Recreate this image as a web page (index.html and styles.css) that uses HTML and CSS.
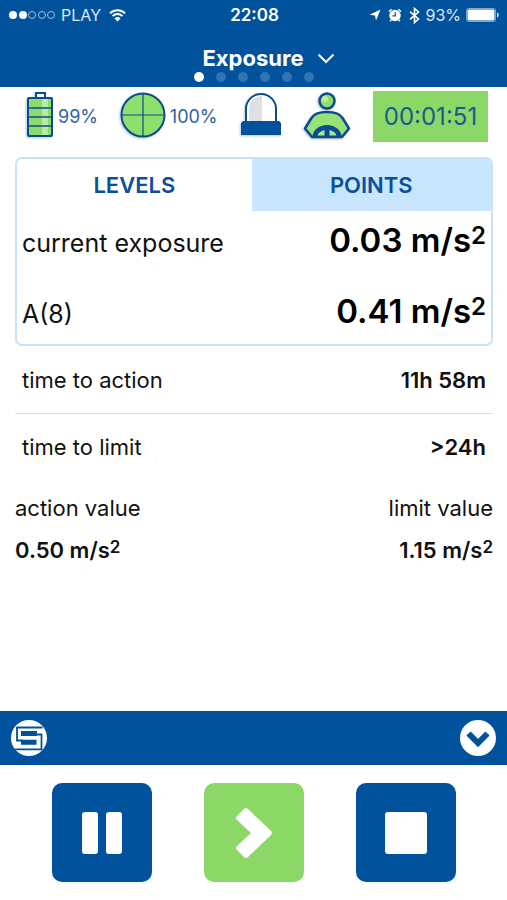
FILE: index.html
```html
<!DOCTYPE html>
<html lang="en">
<head>
<meta charset="utf-8">
<meta name="viewport" content="width=device-width, initial-scale=1">
<title>Exposure</title>
<link rel="stylesheet" href="styles.css">
</head>
<body>
<header class="top">
  <div class="status">
    <div class="status-side">
      <svg class="icon" width="47" height="10" viewBox="0 0 47 10" aria-hidden="true">
        <circle cx="4" cy="5" r="4" fill="#fff"/><circle cx="14" cy="5" r="4" fill="#fff"/>
        <g fill="none" stroke="#9fc0e0"><circle cx="23" cy="5" r="3.5"/><circle cx="33" cy="5" r="3.5"/><circle cx="42" cy="5" r="3.5"/></g>
      </svg>
      <span class="carrier">PLAY</span>
      <svg class="icon" width="17" height="13" viewBox="0 0 17 13" aria-hidden="true">
        <path d="M1 4.4a10.8 10.8 0 0 1 15 0M3.6 7.1a7 7 0 0 1 9.8 0" fill="none" stroke="#fff" stroke-width="2"/>
        <path d="M8.500 12.500 5.500 9.400a4.300 4.300 0 0 1 6 0z" fill="#fff"/>
      </svg>
    </div>
    <time class="clock">22:08</time>
    <div class="status-side status-right">
      <div class="status-icons">
        <svg class="icon" width="12" height="12" viewBox="0 0 12 12" aria-hidden="true"><path d="M11.500.5 7 11.500 6 6.400.5 5.800z" fill="#fff"/></svg>
        <svg class="icon" width="14" height="14" viewBox="0 0 14 14" aria-hidden="true">
          <circle cx="7" cy="7.500" r="5.700" fill="#fff"/><path d="M1 3.800 3.600 1.300M13 3.800l-2.600-2.500M3.300 12l-1.300 1.300M10.700 12l1.300 1.300" stroke="#fff" stroke-width="1.500"/>
          <path d="M7.300 4.200v3.600H4.500" fill="none" stroke="#00529c" stroke-width="1.200"/>
        </svg>
        <svg class="icon" width="11" height="17" viewBox="0 0 11 17" aria-hidden="true"><path d="M1 4.700 9.500 12 5.500 15.500v-14L9.500 5 1 12.300" fill="none" stroke="#fff" stroke-width="1.600"/></svg>
      </div>
      <span class="percent">93%</span>
      <svg class="icon" width="34" height="14" viewBox="0 0 34 14" aria-hidden="true">
        <rect x=".5" y=".5" width="29" height="13" rx="2" fill="none" stroke="#7fa9d2"/><rect x="1.500" y="1.500" width="27" height="11" rx="1" fill="#fff"/>
        <path d="M31 4.500a2.700 2.700 0 0 1 0 5z" fill="#fff"/>
      </svg>
    </div>
  </div>
  <button class="title" type="button">Exposure
    <svg class="icon" width="18" height="11" viewBox="0 0 18 11" aria-hidden="true"><path d="m1.500 1.500 7.500 7.500 7.500-7.500" fill="none" stroke="#fff" stroke-width="2"/></svg>
  </button>
  <div class="pages"><i class="dot current"></i><i class="dot"></i><i class="dot"></i><i class="dot"></i><i class="dot"></i><i class="dot"></i></div>
</header>

<main class="content">
  <section class="sensors" aria-label="Device status">
    <div class="sensor">
      <svg class="shaded" width="28" height="47" viewBox="0 0 28 47" aria-hidden="true">
        <path d="M10 7V2h9v5" fill="#fff" stroke="#0b4c91" stroke-width="2"/>
        <rect x="2" y="7" width="24" height="38" rx="1" fill="#8ddc6b" stroke="#0b4c91" stroke-width="2"/>
        <path d="M16 8h6v36h-6z" fill="#b8eba2"/>
        <path d="M2 17h24M2 26h24M2 35h24" stroke="#0b4c91" stroke-width="1.300"/>
      </svg>
      <span class="reading">99%</span>
    </div>
    <div class="sensor">
      <svg class="shaded" width="46" height="47" viewBox="0 0 46 47" aria-hidden="true">
        <circle cx="23" cy="24" r="21.500" fill="#8ee06c" stroke="#0b4c91" stroke-width="2"/>
        <path d="M23 3v42M2 24h42" stroke="#0b4c91" stroke-width="1.200"/>
      </svg>
      <span class="reading">100%</span>
    </div>
    <svg class="shaded" width="42" height="46" viewBox="0 0 42 46" aria-hidden="true">
      <path d="M7 31V18a15 15 0 0 1 30 0v13z" fill="#fff"/>
      <path d="M10 30V18A13 13 0 0 1 23 5v25z" fill="#dedfe3"/>
      <path d="M7 31V18a15 15 0 0 1 30 0v13" fill="none" stroke="#0b4c91" stroke-width="2"/>
      <path d="M4 30h36l2 2v12H2V32z" fill="#00529c"/>
    </svg>
    <svg class="shaded" width="48" height="48" viewBox="0 0 48 48" aria-hidden="true">
      <circle cx="24" cy="10" r="7.500" fill="#8edf6b" stroke="#0b4c91" stroke-width="2.500"/><circle cx="22" cy="8" r="3" fill="#b9efa4"/>
      <path d="M2 37.500 8.500 27Q12 21 24 21t15.500 6L46 37.500 39 46H9z" fill="#96e276" stroke="#0b4c91" stroke-width="2.500" stroke-linejoin="round"/>
      <path d="M9.500 46a14.500 12 0 0 1 29 0z" fill="#0b4c91"/>
      <path d="M14.500 44.500q1-4 7-5.500v5.500zM33.500 44.500q-1-4-7-5.500v5.500z" fill="#a9e98e"/>
    </svg>
    <time class="timer">00:01:51</time>
  </section>

  <section class="card">
    <div class="tabs" role="tablist">
      <button class="tab" type="button" role="tab" aria-selected="true">LEVELS</button>
      <button class="tab" type="button" role="tab" aria-selected="false">POINTS</button>
    </div>
    <dl class="levels">
      <div class="level"><dt>current exposure</dt><dd>0.03 m/s<sup>2</sup></dd></div>
      <div class="level"><dt>A(8)</dt><dd>0.41 m/s<sup>2</sup></dd></div>
    </dl>
  </section>

  <dl class="times">
    <div class="time-row"><dt>time to action</dt><dd>11h 58m</dd></div>
    <div class="time-row"><dt>time to limit</dt><dd>&gt;24h</dd></div>
  </dl>
  <dl class="values">
    <div><dt>action value</dt><dd>0.50 m/s<sup>2</sup></dd></div>
    <div class="value-end"><dt>limit value</dt><dd>1.15 m/s<sup>2</sup></dd></div>
  </dl>
</main>

<footer>
  <div class="brandbar">
    <svg class="icon" width="36" height="36" viewBox="0 0 36 36" role="img" aria-label="S">
      <circle cx="18" cy="18" r="18" fill="#fff"/>
      <path d="M31.500 7.500H6v13h6M24 14.500h6.500v14.800H3.500" fill="none" stroke="#00529c" stroke-width="1.800"/>
      <path d="M10 11h16v5H10zM10 19.700h15.500v5H10z" fill="#00529c"/>
    </svg>
    <button class="collapse" type="button" aria-label="Collapse">
      <svg class="icon" width="36" height="36" viewBox="0 0 36 36" aria-hidden="true"><circle cx="18" cy="18" r="18" fill="#fff"/><path d="m8.500 13.500 9.500 9.500 9.500-9.500" fill="none" stroke="#00529c" stroke-width="6"/></svg>
    </button>
  </div>
  <div class="controls">
    <button class="control" type="button" aria-label="Pause"><svg class="icon" width="40" height="42" viewBox="0 0 40 42" aria-hidden="true"><path d="M3 0h10q3 0 3 3v36q0 3-3 3H3q-3 0-3-3V3q0-3 3-3zM27 0h10q3 0 3 3v36q0 3-3 3H27q-3 0-3-3V3q0-3 3-3z" fill="#fff"/></svg></button>
    <button class="control start" type="button" aria-label="Start"><svg class="icon" width="36" height="50" viewBox="0 0 36 50" aria-hidden="true"><path d="M8 1q2-2 4 0l23 22q1.500 2 0 4L12 49q-2 2-4 0l-7-7q-2-2 0-4l14-13L1 12q-2-2 0-4z" fill="#fff"/></svg></button>
    <button class="control" type="button" aria-label="Stop"><svg class="icon" width="42" height="42" viewBox="0 0 42 42" aria-hidden="true"><rect width="42" height="42" rx="3" fill="#fff"/></svg></button>
  </div>
</footer>
</body>
</html>
```
FILE: styles.css
```css
* { box-sizing: border-box; }
body {
  margin: 0;
  min-height: 100vh;
  display: flex;
  flex-direction: column;
  background: #fff;
  color: #111;
  font-family: Inter, "Liberation Sans", sans-serif;
}
button { border: 0; padding: 0; font: inherit; color: inherit; background: none; cursor: pointer; }
dl, dd { margin: 0; }
.icon { display: block; flex: none; }

.top { display: flex; flex-direction: column; height: 87px; color: #fff; background: #00529c; }
.status { display: grid; grid-template-columns: 1fr auto 1fr; align-items: center; height: 30px; padding: 0 7px 0 9px; }
.status-side { display: flex; align-items: center; gap: 5px; font-size: 16px; color: #dce9f5; }
.carrier { margin-right: 3px; }
.status-right { justify-content: flex-end; }
.status-icons { display: flex; align-items: center; gap: 7px; }
.clock { font-size: 17px; font-weight: 600; }
.title { display: flex; align-items: center; align-self: center; gap: 13px; height: 28px; margin: 14px 0 0 30px; font-size: 22px; font-weight: 700; }
.pages { display: flex; justify-content: center; gap: 12px; }
.dot { width: 10px; height: 10px; border-radius: 50%; background: #2f74b3; }
.dot.current { background: #fff; }

.content { flex: 1; padding: 0 14px 0 15px; }
.sensors { display: flex; align-items: flex-start; justify-content: space-between; height: 70px; padding: 4px 5px 0 11px; color: #2c62a6; font-size: 18px; }
.sensor { display: flex; align-items: center; gap: 4px; }
.reading { padding-top: 4px; }
.shaded { display: block; flex: none; filter: drop-shadow(-1px 1px 1px #b9c4d4); }
.timer { display: grid; place-items: center; flex: none; width: 115px; height: 51px; background: #8cd867; color: #155c8c; font-size: 24px; }

.card { overflow: hidden; border: 2px solid #c9e2f7; border-radius: 7px; }
.tabs { display: grid; grid-template-columns: 49fr 50fr; }
.tab { height: 52px; color: #0b4f9c; font-size: 22px; font-weight: 600; }
.tab[aria-selected="false"] { background: #c8e6ff; }
.levels { display: grid; gap: 9px; padding: 0 5px; }
.level { display: flex; align-items: baseline; justify-content: space-between; line-height: 59px; }
.level dt { font-size: 25px; }
.level dd { font-size: 33px; font-weight: 600; color: #000; }
sup { line-height: 0; font-weight: 600; font-size: 17px; vertical-align: 5px; }
.level sup { font-size: 24px; vertical-align: 8px; }

.times { font-size: 22px; }
.time-row { display: flex; align-items: center; justify-content: space-between; height: 67px; padding: 0 7px; }
.time-row + .time-row { border-top: 1px solid #e0e0e0; }
.time-row dd, .values dd { font-weight: 600; }
.values { display: flex; justify-content: space-between; margin-top: 7px; font-size: 22px; line-height: 42px; }
.value-end { text-align: right; }

.brandbar { display: flex; align-items: center; justify-content: space-between; height: 54px; padding: 0 11px; background: #00529c; }
.collapse { border-radius: 50%; }
.controls { display: flex; justify-content: center; gap: 52px; padding: 18px 0; }
.control { display: grid; place-items: center; width: 100px; height: 99px; border-radius: 10px; background: #00529c; }
.control.start { background: #8cd867; }
```
